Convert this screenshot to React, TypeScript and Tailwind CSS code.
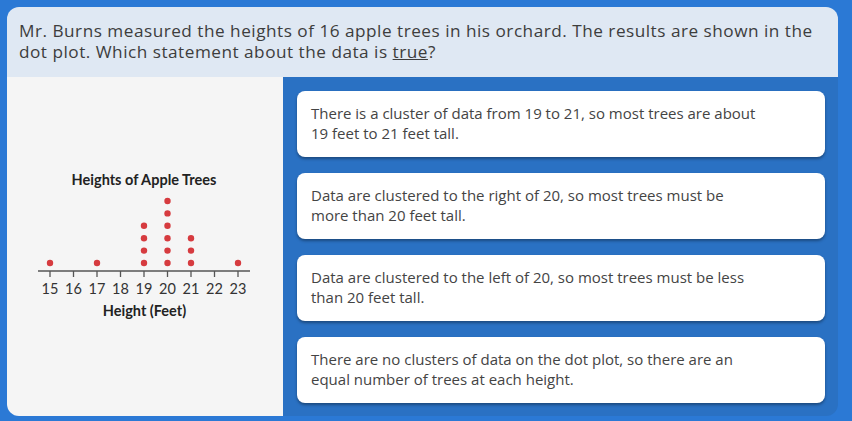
const ticks = [15, 16, 17, 18, 19, 20, 21, 22, 23];
const counts: Record<number, number> = { 15: 1, 17: 1, 19: 4, 20: 6, 21: 3, 23: 1 };

const options = [
  ["There is a cluster of data from 19 to 21, so most trees are about", "19 feet to 21 feet tall."],
  ["Data are clustered to the right of 20, so most trees must be", "more than 20 feet tall."],
  ["Data are clustered to the left of 20, so most trees must be less", "than 20 feet tall."],
  ["There are no clusters of data on the dot plot, so there are an", "equal number of trees at each height."],
];

function DotPlot() {
  const x0 = 43;
  const step = 23.5;
  const axisY = 194;
  return (
    <svg width="276" height="339" viewBox="0 0 276 339" className="block">
      <text
        x="137"
        y="108"
        textAnchor="middle"
        fontSize="14.5"
        fontWeight="700"
        fill="#222"
        fontFamily="Lato, sans-serif"
      >
        Heights of Apple Trees
      </text>
      <line x1="31" y1={axisY} x2="243" y2={axisY} stroke="#555" strokeWidth="1.5" />
      {ticks.map((t, i) => {
        const x = x0 + i * step;
        return (
          <g key={t}>
            <line x1={x} y1={axisY} x2={x} y2={axisY + 6} stroke="#555" strokeWidth="1.3" />
            <text
              x={x}
              y="217"
              textAnchor="middle"
              fontSize="14.5"
              fill="#333"
              fontFamily="Lato, sans-serif"
            >
              {t}
            </text>
            {Array.from({ length: counts[t] ?? 0 }).map((_, j) => (
              <circle key={j} cx={x} cy={186 - j * 12.4} r="3.2" fill="#d63b3f" />
            ))}
          </g>
        );
      })}
      <text
        x="137.5"
        y="239"
        textAnchor="middle"
        fontSize="14.5"
        fontWeight="700"
        fill="#222"
        fontFamily="Lato, sans-serif"
      >
        Height (Feet)
      </text>
    </svg>
  );
}

export default function App() {
  return (
    <div className="h-[421px] w-[852px] bg-[#2b79d5] pt-[7px] pl-[7px] font-['Open_Sans',sans-serif]">
      <div className="flex h-[409px] w-[831px] flex-col overflow-hidden rounded-xl">
        <div className="h-[70px] whitespace-nowrap bg-[#dfe8f3] px-3 pt-[13px] text-[17.2px] leading-[21px] tracking-[0.5px] text-[#3d3d3d]">
          Mr. Burns measured the heights of 16 apple trees in his orchard. The results are shown in the
          <br />
          dot plot. Which statement about the data is <span className="underline">true</span>?
        </div>
        <div className="flex flex-1">
          <div className="w-[276px] bg-[#f5f5f5]">
            <DotPlot />
          </div>
          <div className="flex flex-1 flex-col gap-4 bg-[#2a71c3] pt-[14px] pl-[14px] pr-[13px]">
            {options.map(([a, b]) => (
              <div
                key={a}
                className="h-[66px] whitespace-nowrap rounded-lg bg-white px-[14px] pt-[12px] text-[15px] leading-[20px] text-[#444] shadow-[0_2px_3px_rgba(0,0,0,0.35)]"
              >
                {a}
                <br />
                {b}
              </div>
            ))}
          </div>
        </div>
      </div>
    </div>
  );
}
